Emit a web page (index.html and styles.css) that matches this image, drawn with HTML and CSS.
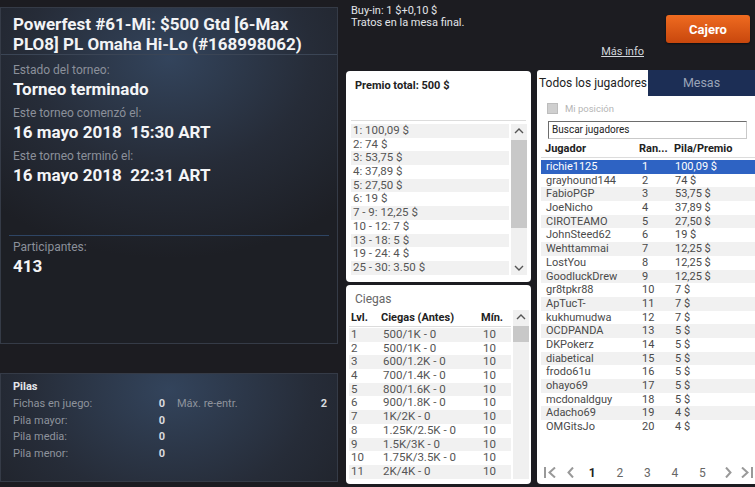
FILE: index.html
```html
<!DOCTYPE html>
<html>
<head>
    <title>Powerfest #61-Mi</title>
    <link rel="stylesheet" href="styles.css">
</head>
<body>
<div class="screen">
    <div class="left">
        <section class="info-panel">
            <h1 class="title">Powerfest #61-Mi: $500 Gtd [6-Max PLO8] PL Omaha Hi-Lo (#168998062)</h1>
            <div class="status">
                <div class="label first">Estado del torneo:</div>
                <div class="value">Torneo terminado</div>
                <div class="label">Este torneo comenzó el:</div>
                <div class="value">16 mayo 2018  15:30 ART</div>
                <div class="label">Este torneo terminó el:</div>
                <div class="value">16 mayo 2018  22:31 ART</div>
            </div>
            <div class="participants">
                <div class="label">Participantes:</div>
                <div class="value">413</div>
            </div>
        </section>

        <section class="stacks-panel">
            <div class="stacks-title">Pilas</div>
            <div class="stacks-grid">
                <span class="s-label">Fichas en juego:</span><span class="s-val">0</span>
                <span class="s-label">Máx. re-entr.</span><span class="s-val">2</span>
                <span class="s-label">Pila mayor:</span><span class="s-val">0</span><span></span><span></span>
                <span class="s-label">Pila media:</span><span class="s-val">0</span><span></span><span></span>
                <span class="s-label">Pila menor:</span><span class="s-val">0</span><span></span><span></span>
            </div>
        </section>
    </div>

    <div class="main">
        <div class="topbar">
            <div class="buyin">
                <div>Buy-in: 1 $+0,10 $</div>
                <div>Tratos en la mesa final.</div>
            </div>
            <button class="cashier">Cajero</button>
            <a class="more-info" href="#">Más info</a>
        </div>

        <div class="columns">
            <div class="mid">
                <section class="card prizes">
                    <div class="prize-head">Premio total: 500 $</div>
                    <div class="scroll-box prize-box">
                        <ul class="rows prize-list">
                            <li>1: 100,09 $</li>
                            <li>2: 74 $</li>
                            <li>3: 53,75 $</li>
                            <li>4: 37,89 $</li>
                            <li>5: 27,50 $</li>
                            <li>6: 19 $</li>
                            <li>7 - 9: 12,25 $</li>
                            <li>10 - 12: 7 $</li>
                            <li>13 - 18: 5 $</li>
                            <li>19 - 24: 4 $</li>
                            <li>25 - 30: 3.50 $</li>
                        </ul>
                        <div class="scrollbar">
                            <div class="sb-btn"><svg width="10" height="6" viewBox="0 0 10 6"><path d="M1 5 L5 1 L9 5" fill="none" stroke="#555" stroke-width="1.4"/></svg></div>
                            <div class="sb-track"><div class="sb-thumb prize-thumb"></div></div>
                            <div class="sb-btn"><svg width="10" height="6" viewBox="0 0 10 6"><path d="M1 1 L5 5 L9 1" fill="none" stroke="#555" stroke-width="1.4"/></svg></div>
                        </div>
                    </div>
                </section>

                <section class="card blinds">
                    <div class="blinds-title">Ciegas</div>
                    <div class="scroll-box blinds-box">
                        <div class="blinds-table">
                            <div class="b-row b-head"><span>Lvl.</span><span>Ciegas (Antes)</span><span>Mín.</span></div>
                            <div class="rows">
                                <div class="b-row"><span>1</span><span>500/1K - 0</span><span>10</span></div>
                                <div class="b-row"><span>2</span><span>500/1K - 0</span><span>10</span></div>
                                <div class="b-row"><span>3</span><span>600/1.2K - 0</span><span>10</span></div>
                                <div class="b-row"><span>4</span><span>700/1.4K - 0</span><span>10</span></div>
                                <div class="b-row"><span>5</span><span>800/1.6K - 0</span><span>10</span></div>
                                <div class="b-row"><span>6</span><span>900/1.8K - 0</span><span>10</span></div>
                                <div class="b-row"><span>7</span><span>1K/2K - 0</span><span>10</span></div>
                                <div class="b-row"><span>8</span><span>1.25K/2.5K - 0</span><span>10</span></div>
                                <div class="b-row"><span>9</span><span>1.5K/3K - 0</span><span>10</span></div>
                                <div class="b-row"><span>10</span><span>1.75K/3.5K - 0</span><span>10</span></div>
                                <div class="b-row"><span>11</span><span>2K/4K - 0</span><span>10</span></div>
                            </div>
                        </div>
                        <div class="scrollbar blinds-bar">
                            <div class="sb-btn"><svg width="10" height="6" viewBox="0 0 10 6"><path d="M1 5 L5 1 L9 5" fill="none" stroke="#555" stroke-width="1.4"/></svg></div>
                            <div class="sb-track"><div class="sb-thumb blinds-thumb"></div></div>
                        </div>
                    </div>
                </section>
            </div>

            <section class="players">
                <div class="tabs">
                    <div class="tab active">Todos los jugadores</div>
                    <div class="tab">Mesas</div>
                </div>
                <div class="players-body">
                    <label class="my-pos"><span class="check"></span>Mi posición</label>
                    <div class="search">Buscar jugadores</div>
                    <div class="p-row p-head"><span>Jugador</span><span>Ran...</span><span>Pila/Premio</span></div>
                    <div class="rows player-list">
                        <div class="p-row selected"><span>richie1125</span><span>1</span><span>100,09 $</span></div>
                        <div class="p-row"><span>grayhound144</span><span>2</span><span>74 $</span></div>
                        <div class="p-row"><span>FabioPGP</span><span>3</span><span>53,75 $</span></div>
                        <div class="p-row"><span>JoeNicho</span><span>4</span><span>37,89 $</span></div>
                        <div class="p-row"><span>CIROTEAMO</span><span>5</span><span>27,50 $</span></div>
                        <div class="p-row"><span>JohnSteed62</span><span>6</span><span>19 $</span></div>
                        <div class="p-row"><span>Wehttammai</span><span>7</span><span>12,25 $</span></div>
                        <div class="p-row"><span>LostYou</span><span>8</span><span>12,25 $</span></div>
                        <div class="p-row"><span>GoodluckDrew</span><span>9</span><span>12,25 $</span></div>
                        <div class="p-row"><span>gr8tpkr88</span><span>10</span><span>7 $</span></div>
                        <div class="p-row"><span>ApTucT-</span><span>11</span><span>7 $</span></div>
                        <div class="p-row"><span>kukhumudwa</span><span>12</span><span>7 $</span></div>
                        <div class="p-row"><span>OCDPANDA</span><span>13</span><span>5 $</span></div>
                        <div class="p-row"><span>DKPokerz</span><span>14</span><span>5 $</span></div>
                        <div class="p-row"><span>diabetical</span><span>15</span><span>5 $</span></div>
                        <div class="p-row"><span>frodo61u</span><span>16</span><span>5 $</span></div>
                        <div class="p-row"><span>ohayo69</span><span>17</span><span>5 $</span></div>
                        <div class="p-row"><span>mcdonaldguy</span><span>18</span><span>5 $</span></div>
                        <div class="p-row"><span>Adacho69</span><span>19</span><span>4 $</span></div>
                        <div class="p-row"><span>OMGitsJo</span><span>20</span><span>4 $</span></div>
                    </div>
                    <div class="pager">
                        <svg class="pg-first" width="12" height="11" viewBox="0 0 12 11"><path d="M1 0 V11 M11 0.5 L5.5 5.5 L11 10.5" fill="none" stroke="#999" stroke-width="2"/></svg>
                        <svg class="pg-prev" width="7" height="11" viewBox="0 0 7 11"><path d="M6 0.5 L1.5 5.5 L6 10.5" fill="none" stroke="#999" stroke-width="2"/></svg>
                        <span class="pg-num current">1</span>
                        <span class="pg-num">2</span>
                        <span class="pg-num">3</span>
                        <span class="pg-num">4</span>
                        <span class="pg-num">5</span>
                        <svg class="pg-next" width="7" height="11" viewBox="0 0 7 11"><path d="M1 0.5 L5.5 5.5 L1 10.5" fill="none" stroke="#999" stroke-width="2"/></svg>
                        <svg class="pg-last" width="12" height="11" viewBox="0 0 12 11"><path d="M11 0 V11 M1 0.5 L6.5 5.5 L1 10.5" fill="none" stroke="#999" stroke-width="2"/></svg>
                    </div>
                </div>
            </section>
        </div>
    </div>
</div>
</body>
</html>
```

FILE: styles.css
```css
* {
    box-sizing: border-box;
}
body {
    margin: 0;
    background: #1c1c21;
    font-family: Roboto, "Liberation Sans", sans-serif;
    font-size: 11px;
    color: #e6e8eb;
}
.screen {
    display: flex;
    width: 755px;
    height: 487px;
    overflow: hidden;
}

/* left column */
.left {
    width: 338px;
    padding-top: 7px;
    display: flex;
    flex-direction: column;
}
.info-panel, .stacks-panel {
    border: 1px solid #353b47;
    background: radial-gradient(ellipse 260px 200px at 50% 15%, #33445c 0%, #262c38 55%, #1d1f25 100%);
}
.info-panel {
    height: 337px;
    display: flex;
    flex-direction: column;
}
.title {
    margin: 0;
    padding: 6px 12px 0;
    height: 47px;
    font-size: 17px;
    line-height: 20px;
    font-weight: 700;
    color: #f2f3f5;
    border-bottom: 1px solid #3b4555;
}
.status {
    height: 181px;
    margin: 0 8px;
    padding: 0 4px;
    border-bottom: 1px solid #2e4564;
}
.participants {
    padding: 3px 12px 0;
}
.label {
    font-size: 12px;
    line-height: 16px;
    color: #8b909a;
    margin-top: 6px;
}
.status .label.first {
    margin-top: 7px;
}
.participants .label {
    margin-top: 0;
}
.value {
    font-size: 17px;
    line-height: 20px;
    font-weight: 700;
    color: #f4f5f7;
    margin-top: 1px;
    white-space: pre;
}
.stacks-panel {
    margin-top: 29px;
    height: 109px;
    padding: 5px 10px 0 12px;
}
.stacks-title {
    font-weight: 700;
    line-height: 16px;
    color: #e4e6ea;
}
.stacks-grid {
    margin-top: 1px;
    display: grid;
    grid-template-columns: 142px 10px 1fr auto;
    line-height: 16.5px;
}
.s-label {
    color: #8e939c;
}
.s-label:nth-child(3) {
    padding-left: 12px;
}
.s-val {
    text-align: right;
    font-weight: 700;
    color: #d9dbdf;
}

/* main area */
.main {
    flex: 1;
    padding-left: 8px;
    display: flex;
    flex-direction: column;
}
.topbar {
    height: 70px;
    display: grid;
    grid-template-columns: 1fr auto;
    grid-template-rows: 43px auto;
}
.buyin {
    padding: 5px 0 0 5px;
    line-height: 12px;
    color: #e2e4e8;
}
.cashier {
    margin: 15px 5px 0 0;
    width: 84px;
    height: 28px;
    border: none;
    border-radius: 3px;
    background: linear-gradient(#ef6b20, #c8470d);
    color: #fff;
    font-family: inherit;
    font-size: 13px;
    font-weight: 700;
    box-shadow: 0 1px 2px rgba(0, 0, 0, 0.5);
}
.more-info {
    grid-column: 1 / -1;
    justify-self: end;
    margin: 3px 111px 0 0;
    line-height: 12px;
    color: #d3d6dc;
    text-decoration: underline;
}
.columns {
    display: flex;
    gap: 6px;
    flex: 1;
}
.mid {
    width: 185px;
    padding-top: 1px;
    display: flex;
    flex-direction: column;
    gap: 3px;
}
.card {
    background: #fff;
    border-radius: 4px;
    color: #555;
}
.prizes {
    height: 211px;
}
.prize-head {
    margin: 0 5px;
    height: 50px;
    padding: 8px 4px 0;
    line-height: 14px;
    font-weight: 700;
    color: #222;
    border-bottom: 1px solid #dcdcdc;
}
.scroll-box {
    display: flex;
    padding-left: 5px;
}
.prize-box {
    margin-top: 3px;
}
.rows {
    margin: 0;
    padding: 0;
    list-style: none;
    flex: 1;
}
.rows > *:nth-child(odd) {
    background: #f1f1f1;
}
.prize-list li {
    height: 13.7px;
    line-height: 13.7px;
    padding-left: 2px;
    font-size: 11.5px;
}
.scrollbar {
    width: 16px;
    margin: 0 4px 0 2px;
    display: flex;
    flex-direction: column;
    background: #f0f0f0;
}
.sb-btn {
    height: 14px;
    display: flex;
    align-items: center;
    justify-content: center;
}
.sb-track {
    flex: 1;
    padding-top: 2px;
}
.sb-thumb {
    background: #c8c8c8;
}
.prize-thumb {
    height: 88px;
}
.blinds {
    height: 199px;
    padding-top: 6px;
}
.blinds-title {
    padding-left: 9px;
    font-size: 12px;
    line-height: 16px;
    color: #666;
}
.blinds-box {
    margin-top: 3px;
    padding-left: 3px;
}
.blinds-table {
    flex: 1;
}
.b-row {
    display: grid;
    grid-template-columns: 32px 100px 1fr;
    height: 13.7px;
    line-height: 13.7px;
    padding-left: 2px;
    font-size: 11.5px;
}
.b-head {
    height: 17px;
    line-height: 15px;
    font-weight: 700;
    color: #222;
    font-size: 11px;
    border-bottom: 1px solid #dcdcdc;
    margin-bottom: 1px;
}
.b-head span:nth-child(2),
.b-head span:nth-child(3) {
    margin-left: -2px;
}
.blinds-bar {
    margin: 0 2px;
}
.blinds-thumb {
    height: 16px;
}

/* players */
.players {
    width: 218px;
    height: 414px;
    display: flex;
    flex-direction: column;
}
.tabs {
    display: flex;
    height: 26px;
}
.tab {
    flex: 1;
    background: #1c2e55;
    color: #9aa4b8;
    font-size: 12.5px;
    line-height: 26px;
    text-align: center;
}
.tab.active {
    flex: none;
    width: 111px;
    background: #fff;
    color: #222;
    font-size: 12px;
    text-align: left;
    padding-left: 2px;
    border-radius: 3px 0 0 0;
    white-space: nowrap;
}
.players-body {
    flex: 1;
    background: #fff;
    border-radius: 0 0 0 4px;
    padding: 7px 0 0 4px;
    color: #4a4a4a;
}
.my-pos {
    display: flex;
    align-items: center;
    height: 11px;
    padding-left: 6px;
    font-size: 9.5px;
    color: #b5b5b5;
}
.check {
    width: 11px;
    height: 11px;
    background: #cfcfcf;
    border: 1px solid #bdbdbd;
    margin-right: 7px;
}
.search {
    margin: 7px 8px 0 7px;
    height: 18px;
    border: 1px solid #c9c9c9;
    border-top-color: #6d6d6d;
    border-left-color: #6d6d6d;
    padding-left: 3px;
    font-size: 10px;
    line-height: 16px;
    color: #222;
}
.p-row {
    display: grid;
    grid-template-columns: 96px 33px 1fr;
    height: 13.7px;
    line-height: 13.7px;
    padding-left: 5px;
    font-size: 11px;
}
.p-head {
    margin-top: 3px;
    height: 16px;
    line-height: 14px;
    padding-left: 4px;
    font-weight: 700;
    color: #222;
    border-bottom: 1px solid #dcdcdc;
    margin-bottom: 2px;
}
.p-head span:nth-child(2) {
    margin-left: -2px;
}
.player-list .p-row.selected {
    background: #2e63c3;
    color: #fff;
}
.pager {
    margin-top: 33px;
    display: flex;
    align-items: center;
    height: 12px;
    padding-left: 3px;
}
.pager svg {
    display: block;
}
.pg-prev {
    margin-left: 11px;
}
.pg-num {
    width: 27.5px;
    text-align: center;
    font-size: 12px;
    color: #666;
}
.pg-num.current {
    margin-left: 4.5px;
    color: #222;
    font-weight: 700;
}
.pg-next {
    margin-left: 9px;
}
.pg-last {
    margin-left: 9px;
}
```
